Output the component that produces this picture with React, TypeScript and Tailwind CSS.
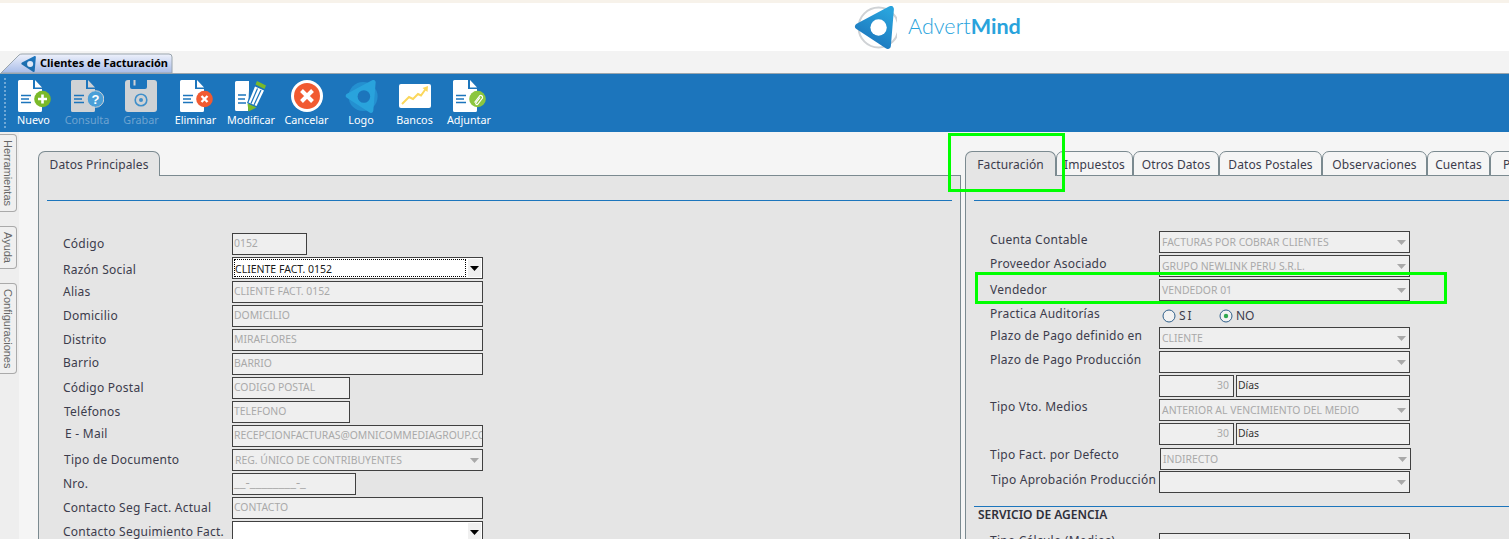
import React from "react";

const BLUE = "#1c75bc";

function Page() {
  const w = 24;
  return (
    <>
      <path d={`M1.5 0H${w - 9}V9H${w}V${30.5}A1.5 1.5 0 0 1 ${w - 1.5} 32H1.5A1.5 1.5 0 0 1 0 30.5V1.5A1.5 1.5 0 0 1 1.5 0Z`} fill="currentColor" />
      <path d={`M${w - 7} 0L${w} 7.5H${w - 7}Z`} fill="currentColor" />
      <path d="M3 15.5H13M3 19H11M3 22.5H13" stroke={BLUE} strokeWidth="1.6" />
    </>
  );
}

function DocIcon({ kind, gray }: { kind: "plus" | "q" | "x" | "clip"; gray?: boolean }) {
  const fill = kind === "plus" ? "#7ab929" : kind === "q" ? "#4a9fd8" : kind === "x" ? "#f15a31" : "#8cc63f";
  return (
    <svg width="33" height="32" viewBox="0 0 33 32" className={`ml-[1px] ${gray ? "text-[#cfd2d5]" : "text-white"}`}>
      <Page />
      <circle cx="24.5" cy="19" r="8.3" fill={fill} stroke={kind === "q" ? "#cfd2d5" : "none"} />
      {kind === "plus" && <path d="M24.5 14.5V23.5M20 19H29" stroke="#fff" strokeWidth="2.6" />}
      {kind === "q" && <text x="24.5" y="23.5" textAnchor="middle" fontSize="13" fontWeight="700" fill="#fff" fontFamily="Liberation Sans, sans-serif">?</text>}
      {kind === "x" && <path d="M21.5 16L27.5 22M27.5 16L21.5 22" stroke="#fff" strokeWidth="2.4" />}
      {kind === "clip" && (
        <path d="M21.5 22.5L27 15.5A2 2 0 0 1 29.5 18L24.5 24.5A1.2 1.2 0 0 1 22.8 23L27 17.5" fill="none" stroke="#fff" strokeWidth="1.2" />
      )}
    </svg>
  );
}

function Floppy() {
  return (
    <svg width="32" height="32" viewBox="0 0 32 32">
      <path d="M3 0H29A3 3 0 0 1 32 3V29A3 3 0 0 1 29 32H3A3 3 0 0 1 0 29V3A3 3 0 0 1 3 0Z" fill="#cfd2d5" />
      <path d="M5 0H22V7A2 2 0 0 1 20 9H7A2 2 0 0 1 5 7Z" fill={BLUE} />
      <rect x="8.5" y="0" width="2" height="5.5" fill="#cfd2d5" />
      <circle cx="16" cy="20" r="5.8" fill="none" stroke="#3f8fca" strokeWidth="1.6" />
      <circle cx="16" cy="20" r="2" fill="#3f8fca" />
    </svg>
  );
}

function Pencil() {
  return (
    <svg width="32" height="32" viewBox="0 0 32 32">
      <path d="M1.5 1H14V10L13 31H1.5A1.5 1.5 0 0 1 0 29.5V2.5A1.5 1.5 0 0 1 1.5 1Z" fill="#fff" />
      <path d="M3 15H11M3 19H10M3 23H11" stroke={BLUE} strokeWidth="1.6" />
      <path d="M22 1L31 5.5L29.5 9L20.5 4.5Z" fill="#7ab929" />
      <path d="M19 5L30 10L22 27.5L12 23Z" fill={BLUE} />
      <path d="M20 6.5L29 10.5L21.5 26L13.5 22.5Z" fill="#fff" />
      <path d="M22.5 8.5L16 23.5M26 10L19 25" stroke={BLUE} strokeWidth="1.2" />
      <path d="M12.5 23.5L21.5 27.5L13.5 31.5Z" fill="#7ab929" />
    </svg>
  );
}

function Cancel() {
  return (
    <svg width="32" height="32" viewBox="0 0 32 32">
      <circle cx="16" cy="16" r="16" fill="#fff" />
      <circle cx="16" cy="16" r="13" fill="#f15a31" />
      <path d="M10.5 10.5L21.5 21.5M21.5 10.5L10.5 21.5" stroke="#fff" strokeWidth="4" />
    </svg>
  );
}

function Mark({ size, a, b, ring, behind, hole = BLUE }: { size: number; a: string; b: string; ring?: boolean; behind?: string; hole?: string }) {
  const id = `g${size}${ring ? 1 : 0}`;
  return (
    <svg width={size} height={size} viewBox="0 0 42 42">
      <defs>
        <linearGradient id={id} x1="0.8" y1="0" x2="0.3" y2="1">
          <stop offset="0" stopColor={a} />
          <stop offset="1" stopColor={b} />
        </linearGradient>
      </defs>
      {ring && <circle cx="24" cy="21" r="19.5" fill="none" stroke="#cfd2d5" strokeWidth="2" />}
      {behind && <circle cx="23" cy="21" r="18.5" fill={behind} />}
      <path d="M4 20L36 3L33 39Z" fill={`url(#${id})`} stroke={`url(#${id})`} strokeWidth="6" strokeLinejoin="round" />
      <circle cx="24" cy="21" r="8" fill={hole} />
    </svg>
  );
}

function Bank() {
  return (
    <svg width="32" height="24" viewBox="0 0 32 24">
      <rect width="32" height="24" rx="2" fill="#fff" />
      <path d="M3 20L10 13L14 15L19 10L22 11.5L27 4.5" fill="none" stroke="#fbd75b" strokeWidth="2" />
      <path d="M23.5 4L29 2L28.5 8Z" fill="#fbd75b" />
    </svg>
  );
}

const tools = [
  { label: "Nuevo", w: "w-[53px]", icon: <DocIcon kind="plus" />, off: false },
  { label: "Consulta", w: "w-[54px]", icon: <DocIcon kind="q" gray />, off: true },
  { label: "Grabar", w: "w-[54px]", icon: <Floppy />, off: true },
  { label: "Eliminar", w: "w-[55px]", icon: <DocIcon kind="x" />, off: false },
  { label: "Modificar", w: "w-[56px]", icon: <Pencil />, off: false },
  { label: "Cancelar", w: "w-[55px]", icon: <Cancel />, off: false },
  { label: "Logo", w: "w-[54px]", icon: <Mark size={33} a="#29a3dc" b="#29a3dc" behind="#2490d0" />, off: false },
  { label: "Bancos", w: "w-[53px]", icon: <div className="flex h-[32px] items-center"><Bank /></div>, off: false },
  { label: "Adjuntar", w: "w-[56px]", icon: <DocIcon kind="clip" />, off: false },
];

function Field({ value = "", w = "w-[251px]", right = false, dark = false, cls = "text-[10.4px] leading-[19px]" }: { value?: string; w?: string; right?: boolean; dark?: boolean; cls?: string }) {
  return (
    <div className={`${w} h-[22px] shrink-0 overflow-hidden whitespace-nowrap border border-[#404040] bg-[#efefef] pl-[1px] pr-[4px] ${right ? "text-right" : ""} ${dark ? "text-[#333]" : "text-[#a9a9a9]"} ${cls}`}>
      {value}
    </div>
  );
}

function Arrow({ on }: { on?: boolean }) {
  return (
    <svg width="9" height="5" viewBox="0 0 9 5" className="shrink-0">
      <path d="M0 0H9L4.5 5Z" fill={on ? "#000" : "#a9a9a9"} />
    </svg>
  );
}

function Select({ value = "", w = "w-[251px]" }: { value?: string; w?: string }) {
  return (
    <div className={`${w} flex h-[22px] shrink-0 items-center justify-between border border-[#404040] bg-[#efefef] pl-[2px] pr-[3px] text-[10.4px] leading-[18px] text-[#a9a9a9]`}>
      <span className="whitespace-nowrap">{value}</span>
      <Arrow />
    </div>
  );
}

function Combo({ value = "", focus = false }: { value?: string; focus?: boolean }) {
  return (
    <div className="flex h-[22px] w-[251px] shrink-0 items-center border border-[#404040] bg-white p-[1px] text-[10.5px] text-[#1a1a1a]">
      <div className={`h-full flex-1 leading-[18px] ${focus ? "border border-dotted border-black" : ""}`}>{value}</div>
      <div className="ml-[2px] flex h-full w-[13px] items-center justify-center bg-[#f0f0f0]">
        <Arrow on />
      </div>
    </div>
  );
}

function Row({ label, cls = "pt-[3px]", labelW, children, className = "" }: { label?: string; cls?: string; labelW: string; children: React.ReactNode; className?: string }) {
  return (
    <div className={`mb-[2px] flex h-[22px] items-start ${className}`}>
      <div className={`${labelW} shrink-0 whitespace-nowrap text-[12px] leading-[16px] tracking-[0.25px] text-[#3c3c4c] ${cls}`}>{label}</div>
      {children}
    </div>
  );
}

function Tab({ label, active, w }: { label: string; active?: boolean; w: string }) {
  return (
    <div className={`${w} -mb-px flex h-[25px] shrink-0 items-center justify-center rounded-t-[7px] border border-[#7b8a90] text-[12px] tracking-[0.1px] text-[#3c3c4c] ${active ? "z-10 border-b-0 bg-[#e5e5e5] pt-[1px]" : "bg-[#f5f5f5] pt-[2px]"}`}>
      {label}
    </div>
  );
}

function SideTab({ label, h }: { label: string; h: string }) {
  return (
    <div className={`${h} mb-[14px] flex w-[17px] items-center justify-center rounded-r-[4px] border border-l-0 border-[#aaaaaa] bg-[#f0f0f0] text-[11px] text-[#666] [writing-mode:vertical-rl] [font-family:'Liberation_Sans',sans-serif]`}>
      {label}
    </div>
  );
}

function Radio({ on }: { on?: boolean }) {
  return (
    <svg width="14" height="14" viewBox="0 0 14 14" className="shrink-0">
      <circle cx="7" cy="7" r="6" fill="#f2f2f2" stroke="#2f5f8a" strokeWidth="1" />
      {on && <circle cx="7" cy="7" r="2.2" fill="#2fa84f" />}
    </svg>
  );
}

export default function App() {
  const LW = "w-[169px]";
  return (
    <div className="relative h-[539px] w-[1509px] overflow-hidden bg-[#f5f5f5] [font-family:'Noto_Sans',sans-serif]">
      <div className="h-[3px] bg-[#f7f2ea]" />
      <div className="flex h-[48px] items-center bg-white pl-[854px]">
        <Mark size={43} a="#29a3dc" b="#1c75bc" ring hole="#fff" />
        <div className="ml-[11px] text-[21.6px] leading-none text-[#29a3dc] [font-family:Lato,sans-serif]">
          <span className="font-light">Advert</span>
          <span className="font-bold">Mind</span>
        </div>
      </div>

      <div className="flex h-[23px] items-end border-b border-[#9aa5ad] bg-[#f3f3f3]">
        <div className="relative flex h-[20px] w-[173px] items-center pl-[21px]">
          <svg width="173" height="20" viewBox="0 0 173 20" className="absolute left-0 top-0">
            <defs>
              <linearGradient id="tabg" x1="0" y1="0" x2="0" y2="1">
                <stop offset="0" stopColor="#eef1fb" />
                <stop offset="1" stopColor="#a8bce8" />
              </linearGradient>
            </defs>
            <path d="M1 20L19 2Q20 1 22 1H169Q172 1 172 4V20Z" fill="url(#tabg)" stroke="#9aa5ad" />
          </svg>
          <div className="relative flex items-center gap-[3px] pt-[1px]">
            <Mark size={16} a="#1c75bc" b="#1c6aa8" hole="#dfe8f6" />
            <span className="whitespace-nowrap text-[11px] font-bold text-black">Clientes de Facturación</span>
          </div>
        </div>
      </div>

      <div className="flex h-[58px] items-start bg-[#1c75bc] pt-[6px]">
        <div className="ml-[4px] mr-[1px] mt-[-2px] h-[50px] w-[1px] border-l-2 border-dotted border-[#6fa8d6]" />
        <div className="flex">
          {tools.map((t) => (
            <div key={t.label} className={`${t.w} flex flex-col items-center`}>
              <div className="flex h-[32px] items-center justify-center">{t.icon}</div>
              <div className={`whitespace-nowrap text-[10.8px] leading-[16px] ${t.off ? "text-[#6ea3d0]" : "text-white"}`}>{t.label}</div>
            </div>
          ))}
        </div>
      </div>

      <div className="flex">
        <div className="h-[407px] w-[19px] shrink-0 bg-[#eeeeee] pt-[2px]">
          <SideTab label="Herramientas" h="h-[78px]" />
          <SideTab label="Ayuda" h="h-[43px]" />
          <SideTab label="Configuraciones" h="h-[91px]" />
        </div>

        <div className="ml-[19px] w-[923px] shrink-0 pt-[19px]">
          <div className="flex">
            <Tab label="Datos Principales" active w="w-[122px]" />
          </div>
          <div className="h-[400px] border border-[#7b8a90] bg-[#e5e5e5] px-[8px] pt-[24px]">
            <div className="h-px bg-[#1c75bc]" />
            <div className="pl-[16px] pt-[32px]">
              <Row labelW={LW} label="Código"><Field value="0152" w="w-[75px]" /></Row>
              <Row labelW={LW} label="Razón Social" cls="pt-[5px]"><Combo value="CLIENTE FACT. 0152" focus /></Row>
              <Row labelW={LW} label="Alias"><Field value="CLIENTE FACT. 0152" /></Row>
              <Row labelW={LW} label="Domicilio"><Field value="DOMICILIO" /></Row>
              <Row labelW={LW} label="Distrito"><Field value="MIRAFLORES" /></Row>
              <Row labelW={LW} label="Barrio" cls="pt-[2px]"><Field value="BARRIO" /></Row>
              <Row labelW={LW} label="Código Postal"><Field value="CODIGO POSTAL" w="w-[118px]" /></Row>
              <Row labelW={LW} label="Teléfonos" cls="pl-[1px] pt-[3px]"><Field value="TELEFONO" w="w-[118px]" /></Row>
              <Row labelW={LW} label="E - Mail" cls="pl-[2px] pt-[1px]"><Field value="RECEPCIONFACTURAS@OMNICOMMEDIAGROUP.COM" cls="text-[10.4px] leading-[19px] tracking-[-0.05px]" /></Row>
              <Row labelW={LW} label="Tipo de Documento" cls="pl-[1px] pt-[3px]"><Select value="REG. ÚNICO DE CONTRIBUYENTES" /></Row>
              <Row labelW={LW} label="Nro."><Field value="__-________-_" w="w-[124px]" cls="text-[13px] leading-[17px]" /></Row>
              <Row labelW={LW} label="Contacto Seg Fact. Actual"><Field value="CONTACTO" /></Row>
              <Row labelW={LW} label="Contacto Seguimiento Fact."><Combo /></Row>
            </div>
          </div>
        </div>

        <div className="ml-[4px] w-[600px] shrink-0 pt-[19px]">
          <div className="flex">
            <Tab label="Facturación" active w="w-[91px]" />
            <Tab label="Impuestos" w="w-[77px]" />
            <Tab label="Otros Datos" w="w-[86px]" />
            <Tab label="Datos Postales" w="w-[103px]" />
            <Tab label="Observaciones" w="w-[105px]" />
            <Tab label="Cuentas" w="w-[63px]" />
            <Tab label="Presupuesto" w="w-[98px]" />
          </div>
          <div className="h-[400px] border border-[#7b8a90] bg-[#e5e5e5] pl-[8px] pt-[24px]">
            <div className="h-px bg-[#1c75bc]" />
            <div className="pl-[16px] pt-[30px]">
              <Row labelW={LW} label="Cuenta Contable" cls="pt-[1px]"><Select value="FACTURAS POR COBRAR CLIENTES" /></Row>
              <Row labelW={LW} label="Proveedor Asociado" cls="pt-[1px]"><Select value="GRUPO NEWLINK PERU S.R.L." /></Row>
              <Row labelW={LW} label="Vendedor"><Select value="VENDEDOR 01" /></Row>
              <Row labelW={LW} label="Practica Auditorías">
                <div className="flex items-center pl-[3px] pt-[6px] text-[12px] leading-[14px] text-[#3c3c4c]">
                  <Radio />
                  <span className="ml-[3px] w-[40px] tracking-[2px]">SI</span>
                  <Radio on />
                  <span className="ml-[3px]">NO</span>
                </div>
              </Row>
              <Row labelW={LW} label="Plazo de Pago definido en" cls="pt-[1px] tracking-[0.15px]"><Select value="CLIENTE" /></Row>
              <Row labelW={LW} label="Plazo de Pago Producción" cls="pt-[1px] tracking-[0.1px]"><Select /></Row>
              <Row labelW={LW}>
                <div className="flex gap-[2px]">
                  <Field value="30" w="w-[75px]" right />
                  <Field value="Días" w="w-[174px]" dark />
                </div>
              </Row>
              <Row labelW={LW} label="Tipo Vto. Medios" cls="pt-0"><Select value="ANTERIOR AL VENCIMIENTO DEL MEDIO" /></Row>
              <Row labelW={LW}>
                <div className="flex gap-[2px]">
                  <Field value="30" w="w-[75px]" right />
                  <Field value="Días" w="w-[174px]" dark />
                </div>
              </Row>
              <Row labelW="w-[170px]" label="Tipo Fact. por Defecto" cls="-mt-[1px]" className="mt-[3px] !mb-px"><Select value="INDIRECTO" /></Row>
              <Row labelW={LW} label="Tipo Aprobación Producción" cls="pl-[1px] pt-[1px] tracking-[0.1px]"><Select /></Row>
            </div>
            <div className="mt-[13px] h-px bg-[#1c75bc]" />
            <div className="pl-[4px] text-[12px] font-semibold leading-[16px] text-[#2f2f3a]">SERVICIO DE AGENCIA</div>
            <div className="pl-[16px] pt-[10px]">
              <Row labelW={LW} label="Tipo Cálculo (Medios)" cls="pt-0"><Field /></Row>
            </div>
          </div>
        </div>
      </div>

      <div className="absolute left-[948px] top-[133px] h-[59px] w-[117px] border-[3px] border-[#00ff00]" />
      <div className="absolute left-[975px] top-[272px] h-[32px] w-[472px] border-[3px] border-[#00ff00]" />
    </div>
  );
}
